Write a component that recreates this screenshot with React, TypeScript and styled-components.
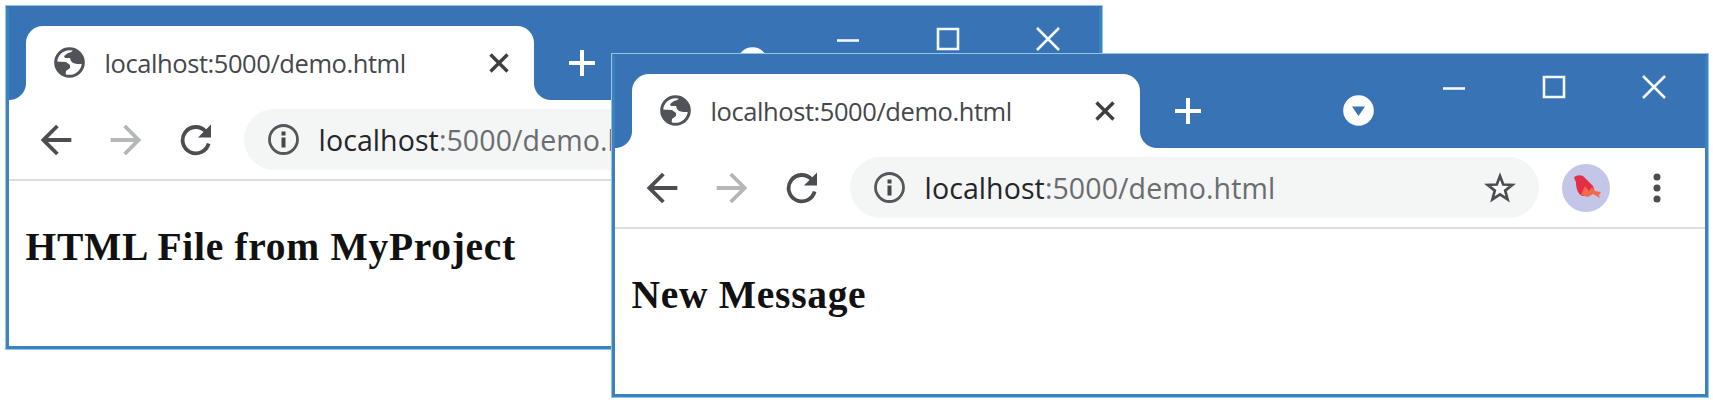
import React from "react";
import styled, { createGlobalStyle } from "styled-components";
import { MdArrowBack, MdArrowForward } from "react-icons/md";

const GlobalStyle = createGlobalStyle`
  * { box-sizing: border-box; }
  body { margin: 0; background: #fff; overflow: hidden; }
`;

const Desktop = styled.main`
  position: relative;
  width: 1713px;
  height: 403px;
`;

const Window = styled.section<{ $x: number; $y: number }>`
  position: absolute;
  left: ${(p) => p.$x}px;
  top: ${(p) => p.$y}px;
  width: 1098px;
  height: 345.5px;
  display: flex;
  flex-direction: column;
  background: #fff;
  border: 1px solid #93c5e6;
`;

const Frame = styled.div`
  flex: 1;
  display: flex;
  flex-direction: column;
  border: 3px solid #3b82bf;
  border-top-color: #3873b6;
`;

const TitleBar = styled.header`
  height: 91px;
  display: flex;
  align-items: flex-end;
  background: #3873b6;
`;

const Tab = styled.div`
  position: relative;
  width: 508px;
  height: 74px;
  margin-left: 17px;
  padding: 0 25px 0 28px;
  display: flex;
  align-items: center;
  background: #fff;
  border-radius: 17px 17px 0 0;

  &::before,
  &::after {
    content: "";
    position: absolute;
    bottom: 0;
    width: 17px;
    height: 17px;
  }
  &::before {
    left: -17px;
    background: radial-gradient(circle at 0 0, #3873b6 16.5px, #fff 17.5px);
  }
  &::after {
    right: -17px;
    background: radial-gradient(circle at 100% 0, #3873b6 16.5px, #fff 17.5px);
  }
`;

const TabTitle = styled.span`
  flex: 1;
  margin-left: 20px;
  font: 25.5px/34px "Open Sans", sans-serif;
  letter-spacing: -0.43px;
  white-space: nowrap;
  color: #45474c;
`;

const BarActions = styled.div`
  flex: 1;
  height: 100%;
  display: flex;
  align-items: flex-start;
  justify-content: space-between;
  padding: 17px 39px 0 35px;
`;

const TabActions = styled.div`
  width: 199px;
  height: 74px;
  display: flex;
  align-items: center;
  justify-content: space-between;
`;

const Controls = styled.div`
  display: flex;
  gap: 76px;
  padding-top: 1px;
`;

const Toolbar = styled.nav`
  height: 81px;
  display: flex;
  align-items: center;
  padding: 1px 32px 0 24px;
  border-bottom: 2px solid #dcdddd;
  color: #4b4d50;
`;

const NavButton = styled.span<{ $muted?: boolean }>`
  width: 46px;
  height: 46px;
  margin-right: 24px;
  display: flex;
  align-items: center;
  justify-content: center;
  color: ${(p) => (p.$muted ? "#b5b6b7" : "inherit")};
`;

const AddressBar = styled.div`
  width: 689px;
  height: 61px;
  margin: 0 23px 0 1px;
  padding: 0 23px 0 24px;
  display: flex;
  align-items: center;
  border-radius: 31px;
  background: #f4f5f5;
`;

const Url = styled.span`
  flex: 1;
  margin-left: 20px;
  font: 28.5px/38px "Open Sans", sans-serif;
  letter-spacing: 0.1px;
  white-space: nowrap;
  color: #6a6c70;
`;

const Host = styled.span`
  color: #24262a;
`;

const Avatar = styled.div`
  width: 48px;
  height: 48px;
  margin-right: 43px;
  border-radius: 50%;
  background: #c3c6e6;
`;

const Page = styled.article`
  padding: 43px 17px;
`;

const Heading = styled.h3`
  margin: 0;
  font: bold 39.5px/46px "Liberation Serif", serif;
  letter-spacing: 0.7px;
  white-space: nowrap;
  color: #111;
`;

const Globe = () => (
  <svg width="31" height="31" viewBox="0 0 31 31">
    <circle cx="15.5" cy="15.5" r="13.8" fill="none" stroke="#505358" strokeWidth="3" />
    <path
      fill="#505358"
      d="M19 2 C19 5 17 5 14 6 L10 9 L11 11 L16 11 L17 14 L19 16 L23 17 L29 17 C31 10 26 3 19 2Z M2 14.5 L12 15 L16 18 L16 21 L12 24 L11.5 29 C5 26 1 20 2 14.5Z"
    />
  </svg>
);

const CloseTab = () => (
  <svg width="20" height="20" viewBox="0 0 20 20" stroke="#3d3f42" strokeWidth="3.4">
    <path d="M1.5 1.5 18.5 18.5M18.5 1.5 1.5 18.5" />
  </svg>
);

const Plus = () => (
  <svg width="26" height="26" viewBox="0 0 26 26" stroke="#fff" strokeWidth="4">
    <path d="M13 0V26M0 13H26" />
  </svg>
);

const TabSearch = () => (
  <svg width="31" height="31" viewBox="0 0 31 31">
    <circle cx="15.5" cy="15.5" r="15.3" fill="#fff" />
    <path d="M9 11.5H22L15.5 21Z" fill="#3873b6" />
  </svg>
);

const Control = ({ d }: { d: string }) => (
  <svg width="24" height="24" viewBox="0 0 24 24" fill="none" stroke="#f4f9fd" strokeWidth="2.6">
    <path d={d} />
  </svg>
);

const Reload = () => (
  <svg width="32" height="32" viewBox="0 0 32 32">
    <path
      d="M28.6 19.5A13.2 13.2 0 1 1 25.5 7.2"
      fill="none"
      stroke="currentColor"
      strokeWidth="3.8"
    />
    <path d="M31 0.5V13.5H18Z" fill="currentColor" />
  </svg>
);

const Star = () => (
  <svg width="32" height="32" viewBox="0 0 32 32">
    <path
      d="M16 4 19.2 12.5 28.3 12.9 21.2 18.6 23.6 27.4 16 22.4 8.4 27.4 10.8 18.6 3.7 12.9 12.8 12.5Z"
      fill="#fafbfb"
      stroke="#4b4d50"
      strokeWidth="2.7"
    />
  </svg>
);

const Info = () => (
  <svg width="31" height="31" viewBox="0 0 31 31">
    <circle cx="15.5" cy="15.5" r="14" fill="none" stroke="#55575a" strokeWidth="2.8" />
    <path d="M13.5 7.5h4v4h-4zM13.5 13.5h4v10h-4z" fill="#45474a" />
  </svg>
);

const Bird = () => (
  <svg width="48" height="48" viewBox="0 0 48 48">
    <path d="M12 14C13 11 20 10 23 14L31 22L33 28L27 32L20 32C15 29 14 23 14 18Z" fill="#e22f45" />
    <path d="M19 31L23 22L27 27L30 23L33 27L39 28L37 31L38 34L31 30L26 33Z" fill="#f4694c" />
  </svg>
);

const Menu = () => (
  <svg width="8" height="30" viewBox="0 0 8 30" fill="#4b4d50">
    <circle cx="4" cy="4" r="3.5" />
    <circle cx="4" cy="15" r="3.5" />
    <circle cx="4" cy="26" r="3.5" />
  </svg>
);

interface BrowserProps {
  x: number;
  y: number;
  heading: string;
}

const Browser = ({ x, y, heading }: BrowserProps) => (
  <Window $x={x} $y={y}>
    <Frame>
      <TitleBar>
        <Tab>
          <Globe />
          <TabTitle>localhost:5000/demo.html</TabTitle>
          <CloseTab />
        </Tab>
        <BarActions>
          <TabActions>
            <Plus />
            <TabSearch />
          </TabActions>
          <Controls>
            <Control d="M1 13.5H23" />
            <Control d="M2 2H22V22H2Z" />
            <Control d="M1 1 23 23M23 1 1 23" />
          </Controls>
        </BarActions>
      </TitleBar>
      <Toolbar>
        <NavButton><MdArrowBack size={46} /></NavButton>
        <NavButton $muted><MdArrowForward size={46} /></NavButton>
        <NavButton><Reload /></NavButton>
        <AddressBar>
          <Info />
          <Url><Host>localhost</Host>:5000/demo.html</Url>
          <Star />
        </AddressBar>
        <Avatar><Bird /></Avatar>
        <Menu />
      </Toolbar>
      <Page>
        <Heading>{heading}</Heading>
      </Page>
    </Frame>
  </Window>
);

const App = () => (
  <>
    <GlobalStyle />
    <Desktop>
      <Browser x={4.6} y={4.6} heading="HTML File from MyProject" />
      <Browser x={610.6} y={52.6} heading="New Message" />
    </Desktop>
  </>
);

export default App;
